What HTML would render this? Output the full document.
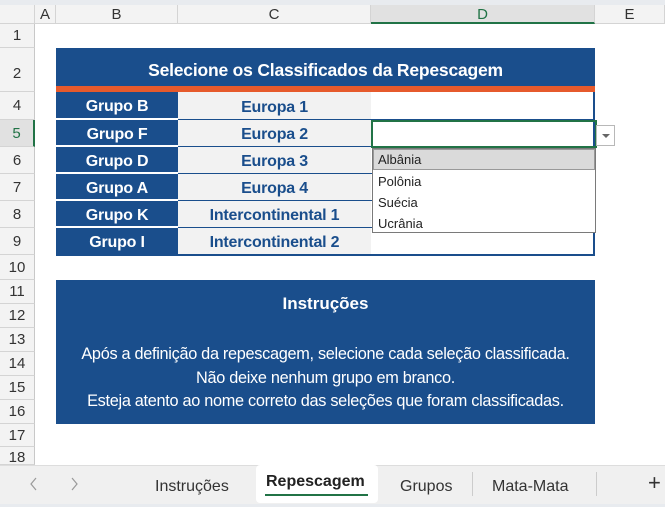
<!DOCTYPE html>
<html><head><meta charset="utf-8"><style>
*{margin:0;padding:0;box-sizing:border-box}
body{width:665px;height:507px;overflow:hidden;background:#fff;font-family:"Liberation Sans",sans-serif;position:relative}
.a{position:absolute}
.ch{top:5px;height:19px;background:#f3f3f3;border-right:1px solid #d4d4d4;border-bottom:1px solid #d4d4d4;font-size:15px;color:#333;text-align:center;line-height:19px}
.rh{left:0;width:35px;background:#f3f3f3;border-bottom:1px solid #d4d4d4;border-right:1px solid #c8c8c8;font-size:15px;color:#333;text-align:center}
.c{display:flex;align-items:center;justify-content:center;font-weight:bold;font-size:16px;letter-spacing:-0.2px;padding-top:4px}
.l{left:56px;width:122px;background:#1a4e8c;color:#fff;border-bottom:2px solid #fff}
.m{left:178px;width:193px;background:#f2f2f2;color:#1a4e8c;border-bottom:1px solid #1a4e8c}
.r{left:371px;width:224px;background:#fff;border-bottom:1px solid #1a4e8c;border-right:2px solid #1a4e8c}
.it{left:378px;font-size:13px;color:#222}
</style></head><body>
<div class="a" style="left:0;top:0;width:665px;height:5px;background:#e8ebef"></div>
<div class="a ch" style="left:0;width:35px"></div>
<div class="a ch" style="left:35px;width:21px">A</div>
<div class="a ch" style="left:56px;width:122px">B</div>
<div class="a ch" style="left:178px;width:193px">C</div>
<div class="a ch" style="left:371px;width:224px;background:#e1e1e1;border-bottom:2px solid #217346;color:#217346">D</div>
<div class="a ch" style="left:595px;width:70px">E</div>

<div class="a rh" style="top:24px;height:24px;line-height:24px">1</div>
<div class="a rh" style="top:48px;height:44px;line-height:52px">2</div>
<div class="a rh" style="top:92px;height:28px;line-height:28px">4</div>
<div class="a rh" style="top:120px;height:27px;line-height:27px;background:#e1e1e1;color:#217346;border-right:2px solid #217346">5</div>
<div class="a rh" style="top:147px;height:27px;line-height:27px">6</div>
<div class="a rh" style="top:174px;height:27px;line-height:27px">7</div>
<div class="a rh" style="top:201px;height:27px;line-height:27px">8</div>
<div class="a rh" style="top:228px;height:27px;line-height:27px">9</div>
<div class="a rh" style="top:255px;height:25px;line-height:25px">10</div>
<div class="a rh" style="top:280px;height:24px;line-height:24px">11</div>
<div class="a rh" style="top:304px;height:24px;line-height:24px">12</div>
<div class="a rh" style="top:328px;height:24px;line-height:24px">13</div>
<div class="a rh" style="top:352px;height:24px;line-height:24px">14</div>
<div class="a rh" style="top:376px;height:24px;line-height:24px">15</div>
<div class="a rh" style="top:400px;height:24px;line-height:24px">16</div>
<div class="a rh" style="top:424px;height:23px;line-height:23px">17</div>
<div class="a rh" style="top:447px;height:18px;line-height:22px;overflow:hidden">18</div>

<div class="a c" style="left:56px;top:48px;width:539px;height:38px;background:#1a4e8c;color:#fff;font-size:17.5px;padding-top:6px">Selecione os Classificados da Repescagem</div>
<div class="a" style="left:56px;top:86px;width:539px;height:6px;background:#e65a2c"></div>

<div class="a c l" style="top:92px;height:28px">Grupo B</div>
<div class="a c m" style="top:92px;height:28px">Europa 1</div>
<div class="a r" style="top:92px;height:28px"></div>
<div class="a c l" style="top:120px;height:27px">Grupo F</div>
<div class="a c m" style="top:120px;height:27px">Europa 2</div>
<div class="a r" style="top:120px;height:27px"></div>
<div class="a c l" style="top:147px;height:27px">Grupo D</div>
<div class="a c m" style="top:147px;height:27px">Europa 3</div>
<div class="a r" style="top:147px;height:27px"></div>
<div class="a c l" style="top:174px;height:27px">Grupo A</div>
<div class="a c m" style="top:174px;height:27px">Europa 4</div>
<div class="a r" style="top:174px;height:27px"></div>
<div class="a c l" style="top:201px;height:27px">Grupo K</div>
<div class="a c m" style="top:201px;height:27px">Intercontinental 1</div>
<div class="a r" style="top:201px;height:27px"></div>
<div class="a c l" style="top:228px;height:28px;border-bottom:2px solid #1a4e8c">Grupo I</div>
<div class="a c m" style="top:228px;height:28px;border-bottom:2px solid #1a4e8c">Intercontinental 2</div>
<div class="a r" style="top:228px;height:28px;border-bottom:2px solid #1a4e8c"></div>

<div class="a" style="left:371px;top:120px;width:226px;height:28px;border:2px solid #217346"></div>
<div class="a" style="left:596px;top:125px;width:19px;height:21px;border:1px solid #b8b8b8;background:#fff"></div>
<div class="a" style="left:602px;top:134px;width:0;height:0;border-left:4px solid transparent;border-right:4px solid transparent;border-top:4px solid #666"></div>

<div class="a" style="left:372px;top:148px;width:224px;height:85px;border:1px solid #7a7a7a;background:#fff"></div>
<div class="a" style="left:373px;top:149px;width:222px;height:21px;background:#dadada;border:1px solid #999"></div>
<div class="a it" style="top:152px">Albânia</div>
<div class="a it" style="top:174px">Polônia</div>
<div class="a it" style="top:195px">Suécia</div>
<div class="a it" style="top:216px">Ucrânia</div>

<div class="a" style="left:56px;top:280px;width:539px;height:144px;background:#1a4e8c;color:#fff;text-align:center">
<div style="font-weight:bold;font-size:17px;margin-top:14px">Instruções</div>
<div style="font-size:16.3px;line-height:23.5px;margin-top:29px;letter-spacing:-0.3px;white-space:nowrap">Após a definição da repescagem, selecione cada seleção classificada.<br>Não deixe nenhum grupo em branco.<br>Esteja atento ao nome correto das seleções que foram classificadas.</div>
</div>

<div class="a" style="left:0;top:465px;width:665px;height:42px;background:#f0f0f0;border-top:1px solid #ddd"></div>
<div class="a" style="left:0;top:504px;width:665px;height:3px;background:#e8ebef"></div>
<svg class="a" style="left:28px;top:476px" width="12" height="16"><path d="M8 2 L3 8 L8 14" stroke="#999" fill="none" stroke-width="1.2"/></svg>
<svg class="a" style="left:68px;top:476px" width="12" height="16"><path d="M4 2 L9 8 L4 14" stroke="#999" fill="none" stroke-width="1.2"/></svg>
<div class="a" style="left:155px;top:478px;font-size:16px;color:#333">Instruções</div>
<div class="a" style="left:256px;top:465px;width:122px;height:38px;background:#fff;border-radius:4px"></div>
<div class="a" style="left:266px;top:473px;font-size:16px;font-weight:bold;color:#222">Repescagem</div>
<div class="a" style="left:265px;top:494px;width:103px;height:2px;background:#217346"></div>
<div class="a" style="left:400px;top:478px;font-size:16px;color:#333">Grupos</div>
<div class="a" style="left:472px;top:472px;width:1px;height:24px;background:#ccc"></div>
<div class="a" style="left:492px;top:478px;font-size:16px;color:#333">Mata-Mata</div>
<div class="a" style="left:596px;top:472px;width:1px;height:24px;background:#ccc"></div>
<div class="a" style="left:648px;top:470px;font-size:22px;color:#333">+</div>
</body></html>
